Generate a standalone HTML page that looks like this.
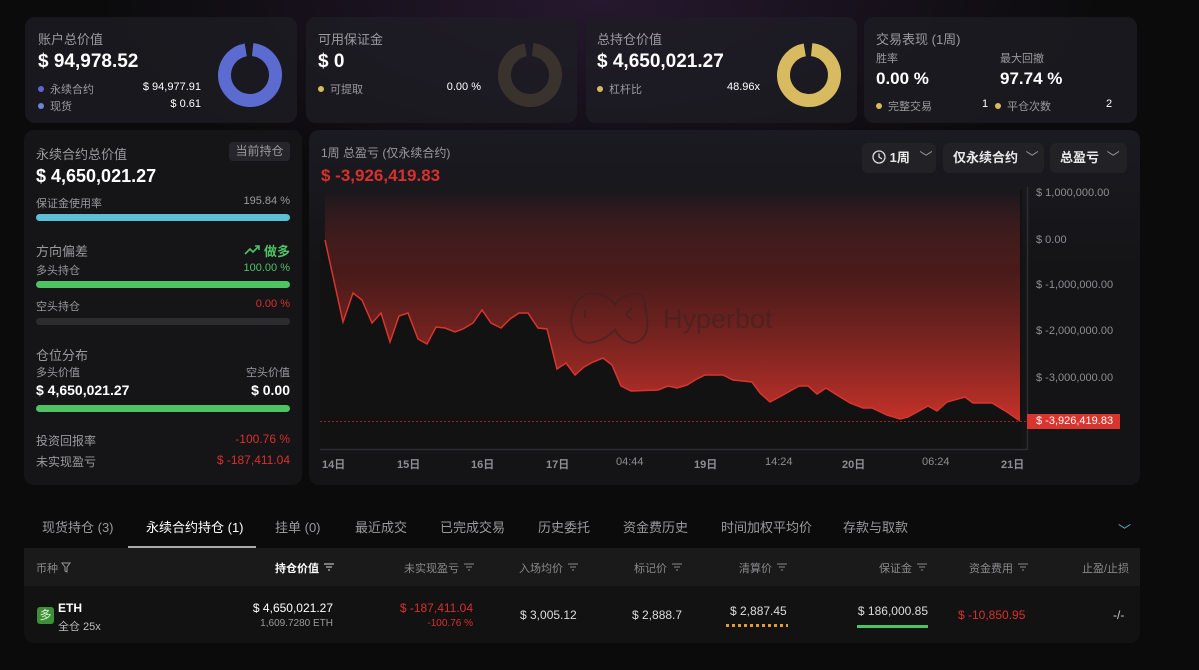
<!DOCTYPE html>
<html><head><meta charset="utf-8"><style>
*{margin:0;padding:0;box-sizing:border-box}
body{width:1199px;height:670px;overflow:hidden;background:#0b0b0c;font-family:"Liberation Sans","Noto Sans CJK SC",sans-serif;color:#fff;position:relative}
.bg{position:absolute;left:0;top:0;width:1199px;height:300px;background:radial-gradient(ellipse 500px 200px at 600px 0px,rgba(60,35,75,0.55),transparent)}
.a{position:absolute;white-space:nowrap}
.r{position:absolute;white-space:nowrap;text-align:right}
.card{position:absolute;background:rgba(30,30,36,0.75);border-radius:10px}
.g{color:#9a9a9e}
.dot{display:inline-block;width:6px;height:6px;border-radius:50%;margin-right:6px;vertical-align:1px}
.bar{position:absolute;height:7px;border-radius:4px}
.red{color:#d8302c}
.grn{color:#4fc264}
.yl{position:absolute;left:1036px;font-size:11px;color:#8e8e92}
.xl{position:absolute;top:456px;font-size:11px;color:#8e8e92;font-weight:bold}
.btn{position:absolute;top:143px;height:30px;background:#222226;border-radius:6px;font-size:13px;font-weight:bold;color:#e8e8e8;line-height:30px;padding-left:10px}
.th{position:absolute;top:560px;font-size:11px;color:#8a8a8e}
.tab{position:absolute;top:517px;font-size:13px;color:#9a9a9e}
.fl{display:inline-block;width:10px;vertical-align:1px;margin-left:5px}
</style></head><body>
<div class="bg"></div>

<div class="card" style="left:25px;top:17px;width:272px;height:106px"></div>
<div class="card" style="left:306px;top:17px;width:271px;height:106px"></div>
<div class="card" style="left:586px;top:17px;width:271px;height:106px"></div>
<div class="card" style="left:864px;top:17px;width:273px;height:106px"></div>

<div class="a g" style="left:38px;top:29px;font-size:13px">账户总价值</div>
<div class="a" style="left:38px;top:51px;font-size:19px;font-weight:bold">$ 94,978.52</div>
<div class="a g" style="left:38px;top:81px;font-size:11px"><span class="dot" style="background:#5a67cf"></span>永续合约</div>
<div class="r" style="right:998px;top:81px;font-size:11px">$ 94,977.91</div>
<div class="a g" style="left:38px;top:98px;font-size:11px"><span class="dot" style="background:#6b86d6"></span>现货</div>
<div class="r" style="right:998px;top:98px;font-size:11px">$ 0.61</div>

<div class="a g" style="left:318px;top:29px;font-size:13px">可用保证金</div>
<div class="a" style="left:318px;top:51px;font-size:19px;font-weight:bold">$ 0</div>
<div class="a g" style="left:318px;top:81px;font-size:11px"><span class="dot" style="background:#d8bb60"></span>可提取</div>
<div class="r" style="right:718px;top:81px;font-size:11px">0.00 %</div>

<div class="a g" style="left:597px;top:29px;font-size:13px">总持仓价值</div>
<div class="a" style="left:597px;top:51px;font-size:19px;font-weight:bold">$ 4,650,021.27</div>
<div class="a g" style="left:597px;top:81px;font-size:11px"><span class="dot" style="background:#d8bb60"></span>杠杆比</div>
<div class="r" style="right:439px;top:81px;font-size:11px">48.96x</div>

<div class="a g" style="left:876px;top:29px;font-size:13px">交易表现 (1周)</div>
<div class="a g" style="left:876px;top:50px;font-size:11px">胜率</div>
<div class="a g" style="left:1000px;top:50px;font-size:11px">最大回撤</div>
<div class="a" style="left:876px;top:69px;font-size:17px;font-weight:bold">0.00 %</div>
<div class="a" style="left:1000px;top:69px;font-size:17px;font-weight:bold">97.74 %</div>
<div class="a g" style="left:876px;top:98px;font-size:11px"><span class="dot" style="background:#d8bb60"></span>完整交易</div>
<div class="a" style="left:982px;top:98px;font-size:11px">1</div>
<div class="a g" style="left:995px;top:98px;font-size:11px"><span class="dot" style="background:#d8bb60"></span>平仓次数</div>
<div class="a" style="left:1106px;top:98px;font-size:11px">2</div>

<svg class="a" style="left:0;top:0" width="1199" height="130">
<g fill="none" stroke-width="13">
<circle cx="250" cy="75" r="25.5" stroke="#5b6bd0" stroke-dasharray="153 7.2" transform="rotate(-84 250 75)"/>
<circle cx="530" cy="75" r="25.5" stroke="#3a322d" stroke-dasharray="153 7.2" transform="rotate(-84 530 75)"/>
<circle cx="809" cy="75" r="25.5" stroke="#d8bb60" stroke-dasharray="153 7.2" transform="rotate(-84 809 75)"/>
</g></svg>

<div class="card" style="left:24px;top:130px;width:278px;height:355px;background:#151517"></div>
<div class="a g" style="left:36px;top:144px;font-size:13px">永续合约总价值</div>
<div class="a" style="left:229px;top:142px;width:61px;height:19px;background:#26262a;border-radius:4px;font-size:12px;color:#9a9a9e;text-align:center;line-height:19px">当前持仓</div>
<div class="a" style="left:36px;top:166px;font-size:18px;font-weight:bold">$ 4,650,021.27</div>
<div class="a g" style="left:36px;top:195px;font-size:11px">保证金使用率</div>
<div class="r g" style="right:909px;top:195px;font-size:11px">195.84 %</div>
<div class="bar" style="left:36px;top:214px;width:254px;background:#5bbfd6"></div>
<div class="a g" style="left:36px;top:241px;font-size:13px">方向偏差</div>
<div class="r grn" style="right:909px;top:241px;font-size:13px;font-weight:bold"><svg width="16" height="10" style="vertical-align:1px;margin-right:4px"><path d="M1 9 L6 4 L9 7 L15 1 M11 1 H15 V5" fill="none" stroke="#4fc264" stroke-width="1.6"/></svg>做多</div>
<div class="a g" style="left:36px;top:262px;font-size:11px">多头持仓</div>
<div class="r grn" style="right:909px;top:262px;font-size:11px">100.00 %</div>
<div class="bar" style="left:36px;top:281px;width:254px;background:#4fc264"></div>
<div class="a g" style="left:36px;top:298px;font-size:11px">空头持仓</div>
<div class="r red" style="right:909px;top:298px;font-size:11px">0.00 %</div>
<div class="bar" style="left:36px;top:318px;width:254px;background:#2c2c2e"></div>
<div class="a g" style="left:36px;top:345px;font-size:13px">仓位分布</div>
<div class="a g" style="left:36px;top:364px;font-size:11px">多头价值</div>
<div class="r g" style="right:909px;top:364px;font-size:11px">空头价值</div>
<div class="a" style="left:36px;top:382px;font-size:14px;font-weight:bold">$ 4,650,021.27</div>
<div class="r" style="right:909px;top:382px;font-size:14px;font-weight:bold">$ 0.00</div>
<div class="bar" style="left:36px;top:405px;width:254px;background:#4fc264"></div>
<div class="a g" style="left:36px;top:432px;font-size:12px">投资回报率</div>
<div class="r red" style="right:909px;top:432px;font-size:12px">-100.76 %</div>
<div class="a g" style="left:36px;top:453px;font-size:12px">未实现盈亏</div>
<div class="r red" style="right:909px;top:453px;font-size:12px">$ -187,411.04</div>

<div class="card" style="left:309px;top:130px;width:831px;height:355px;background:linear-gradient(180deg,#1b1a22,#141416 40%)"></div>
<div class="a g" style="left:321px;top:144px;font-size:12px">1周 总盈亏 (仅永续合约)</div>
<div class="a red" style="left:321px;top:166px;font-size:17px;font-weight:bold">$ -3,926,419.83</div>
<div class="btn" style="left:862px;width:74px"><svg width="14" height="14" style="vertical-align:-2px"><circle cx="7" cy="7" r="6" fill="none" stroke="#ddd" stroke-width="1.3"/><path d="M7 3.5V7L10 9" fill="none" stroke="#ddd" stroke-width="1.3"/></svg> 1周 <span style="color:#999;font-weight:normal;margin-left:6px">﹀</span></div>
<div class="btn" style="left:943px;width:101px">仅永续合约 <span style="color:#999;font-weight:normal;margin-left:4px">﹀</span></div>
<div class="btn" style="left:1050px;width:77px">总盈亏 <span style="color:#999;font-weight:normal;margin-left:4px">﹀</span></div>

<svg class="a" style="left:0;top:0" width="1199" height="490">
<defs><linearGradient id="rg" x1="0" y1="0" x2="0" y2="1"><stop offset="0" stop-color="#c0302a" stop-opacity="0"/><stop offset="0.35" stop-color="#6a1f1d" stop-opacity="0.6"/><stop offset="1" stop-color="#c8322a"/></linearGradient></defs>
<rect x="325" y="190" width="697" height="232" fill="url(#rg)"/>
<polygon fill="#121212" points="325,240 343,322 353,293 362,300 372,323 381,313 390,342 399,316 408,313 418,339 427,344 436,327 445,328 455,332 463,329 473,323 482,310 491,323 501,328 510,319 519,313 528,313 538,328 547,329 557,369 566,363 575,375 584,367 593,362 603,358 612,365 621,386 631,391 658,390 668,386 677,388 687,385 695,380 705,375 723,375 733,380 752,382 760,393 770,402 783,395 799,386 808,386 817,394 826,388 837,395 850,403 863,408 872,408 887,415 900,419 908,417 928,406 937,411 947,402 965,397 973,403 992,403 1007,412 1020,421 1022,421 1022,449 320,449 320,240"/>
<rect x="1020" y="190" width="2" height="232" fill="#121212"/>
<polyline fill="none" stroke="#d8352e" stroke-width="1.5" points="325,240 343,322 353,293 362,300 372,323 381,313 390,342 399,316 408,313 418,339 427,344 436,327 445,328 455,332 463,329 473,323 482,310 491,323 501,328 510,319 519,313 528,313 538,328 547,329 557,369 566,363 575,375 584,367 593,362 603,358 612,365 621,386 631,391 658,390 668,386 677,388 687,385 695,380 705,375 723,375 733,380 752,382 760,393 770,402 783,395 799,386 808,386 817,394 826,388 837,395 850,403 863,408 872,408 887,415 900,419 908,417 928,406 937,411 947,402 965,397 973,403 992,403 1007,412 1020,421"/>
<line x1="320" y1="421.5" x2="1030" y2="421.5" stroke="#c0302a" stroke-width="0.8" stroke-dasharray="2 2"/>
<line x1="320" y1="449.5" x2="1028" y2="449.5" stroke="#2c2c34" stroke-width="1.5"/>
<line x1="1027.5" y1="187" x2="1027.5" y2="450" stroke="#2c2c34" stroke-width="1.5"/>
<g fill="none" stroke="#3a2222" stroke-width="2" opacity="0.55"><path d="M575 305 C585 285,610 295,615 305 C620 295,645 285,645 305 C648 320,648 330,645 335 C635 350,620 340,615 330 C605 340,585 350,575 335 C570 325,570 315,575 305Z"/><path d="M632 308 L626 314 L632 320"/><line x1="585" y1="310" x2="585" y2="318"/></g>
<text x="663" y="328" font-family="Liberation Sans" font-size="27" fill="#3a2222" opacity="0.55">Hyperbot</text>
</svg>
<div class="yl" style="top:187px">$ 1,000,000.00</div>
<div class="yl" style="top:234px">$ 0.00</div>
<div class="yl" style="top:279px">$ -1,000,000.00</div>
<div class="yl" style="top:325px">$ -2,000,000.00</div>
<div class="yl" style="top:372px">$ -3,000,000.00</div>
<div class="a" style="left:1027px;top:414px;width:93px;height:15px;background:#d8352e;font-size:11px;line-height:15px;padding-left:9px">$ -3,926,419.83</div>
<div class="xl" style="left:322px">14日</div>
<div class="xl" style="left:397px">15日</div>
<div class="xl" style="left:471px">16日</div>
<div class="xl" style="left:546px">17日</div>
<div class="xl" style="left:616px;font-weight:normal">04:44</div>
<div class="xl" style="left:694px">19日</div>
<div class="xl" style="left:765px;font-weight:normal">14:24</div>
<div class="xl" style="left:842px">20日</div>
<div class="xl" style="left:922px;font-weight:normal">06:24</div>
<div class="xl" style="left:1001px">21日</div>

<div class="tab" style="left:42px">现货持仓 (3)</div>
<div class="tab" style="left:146px;color:#fff">永续合约持仓 (1)</div>
<div class="tab" style="left:275px">挂单 (0)</div>
<div class="tab" style="left:355px">最近成交</div>
<div class="tab" style="left:440px">已完成交易</div>
<div class="tab" style="left:538px">历史委托</div>
<div class="tab" style="left:623px">资金费历史</div>
<div class="tab" style="left:721px">时间加权平均价</div>
<div class="tab" style="left:843px">存款与取款</div>
<div class="tab" style="left:1118px;top:520px;color:#5aa7c8">﹀</div>
<div class="a" style="left:128px;top:546px;width:128px;height:2px;background:#aaa"></div>

<div class="card" style="left:24px;top:548px;width:1116px;height:95px;background:#121212;border-radius:0 0 10px 10px"></div>
<div class="a" style="left:24px;top:548px;width:1116px;height:38px;background:#1a1a1a"></div>
<div class="th" style="left:36px">币种 <svg width="10" height="11" style="vertical-align:-1px"><path d="M1 1H9L6 5V10L4 9V5Z" fill="none" stroke="#999"/></svg></div>
<div class="th" style="left:275px;color:#fff;font-weight:bold">持仓价值<svg class="fl" height="8"><path d="M0 1H10M2 4H8M4 7H6" stroke="#ddd"/></svg></div>
<div class="th" style="left:404px">未实现盈亏<svg class="fl" height="8"><path d="M0 1H10M2 4H8M4 7H6" stroke="#888"/></svg></div>
<div class="th" style="left:519px">入场均价<svg class="fl" height="8"><path d="M0 1H10M2 4H8M4 7H6" stroke="#888"/></svg></div>
<div class="th" style="left:634px">标记价<svg class="fl" height="8"><path d="M0 1H10M2 4H8M4 7H6" stroke="#888"/></svg></div>
<div class="th" style="left:739px">清算价<svg class="fl" height="8"><path d="M0 1H10M2 4H8M4 7H6" stroke="#888"/></svg></div>
<div class="th" style="left:879px">保证金<svg class="fl" height="8"><path d="M0 1H10M2 4H8M4 7H6" stroke="#888"/></svg></div>
<div class="th" style="left:969px">资金费用<svg class="fl" height="8"><path d="M0 1H10M2 4H8M4 7H6" stroke="#888"/></svg></div>
<div class="th" style="left:1082px">止盈/止损</div>

<div class="a" style="left:37px;top:607px;width:17px;height:17px;background:#3f8f3a;border-radius:3px;font-size:12px;text-align:center;line-height:17px;color:#d8f0d0">多</div>
<div class="a" style="left:58px;top:601px;font-size:12px;font-weight:bold">ETH</div>
<div class="a" style="left:58px;top:618px;font-size:11px;color:#bbb">全仓 25x</div>
<div class="r" style="right:866px;top:601px;font-size:12px">$ 4,650,021.27</div>
<div class="r g" style="right:866px;top:618px;font-size:10px">1,609.7280 ETH</div>
<div class="r red" style="right:726px;top:601px;font-size:12px">$ -187,411.04</div>
<div class="r red" style="right:726px;top:618px;font-size:10px">-100.76 %</div>
<div class="a" style="left:520px;top:608px;font-size:12px;color:#ddd">$ 3,005.12</div>
<div class="a" style="left:632px;top:608px;font-size:12px;color:#ddd">$ 2,888.7</div>
<div class="a" style="left:730px;top:604px;font-size:12px;color:#ddd">$ 2,887.45</div>
<div class="a" style="left:726px;top:624px;width:62px;height:3px;background:repeating-linear-gradient(90deg,#e39a3a 0 3px,transparent 3px 6px)"></div>
<div class="r" style="right:271px;top:604px;font-size:12px;color:#ddd">$ 186,000.85</div>
<div class="a" style="left:857px;top:625px;width:71px;height:3px;background:#4fc264"></div>
<div class="a red" style="left:958px;top:608px;font-size:12px">$ -10,850.95</div>
<div class="a" style="left:1113px;top:608px;font-size:12px;color:#ccc">-/-</div>
</body></html>
